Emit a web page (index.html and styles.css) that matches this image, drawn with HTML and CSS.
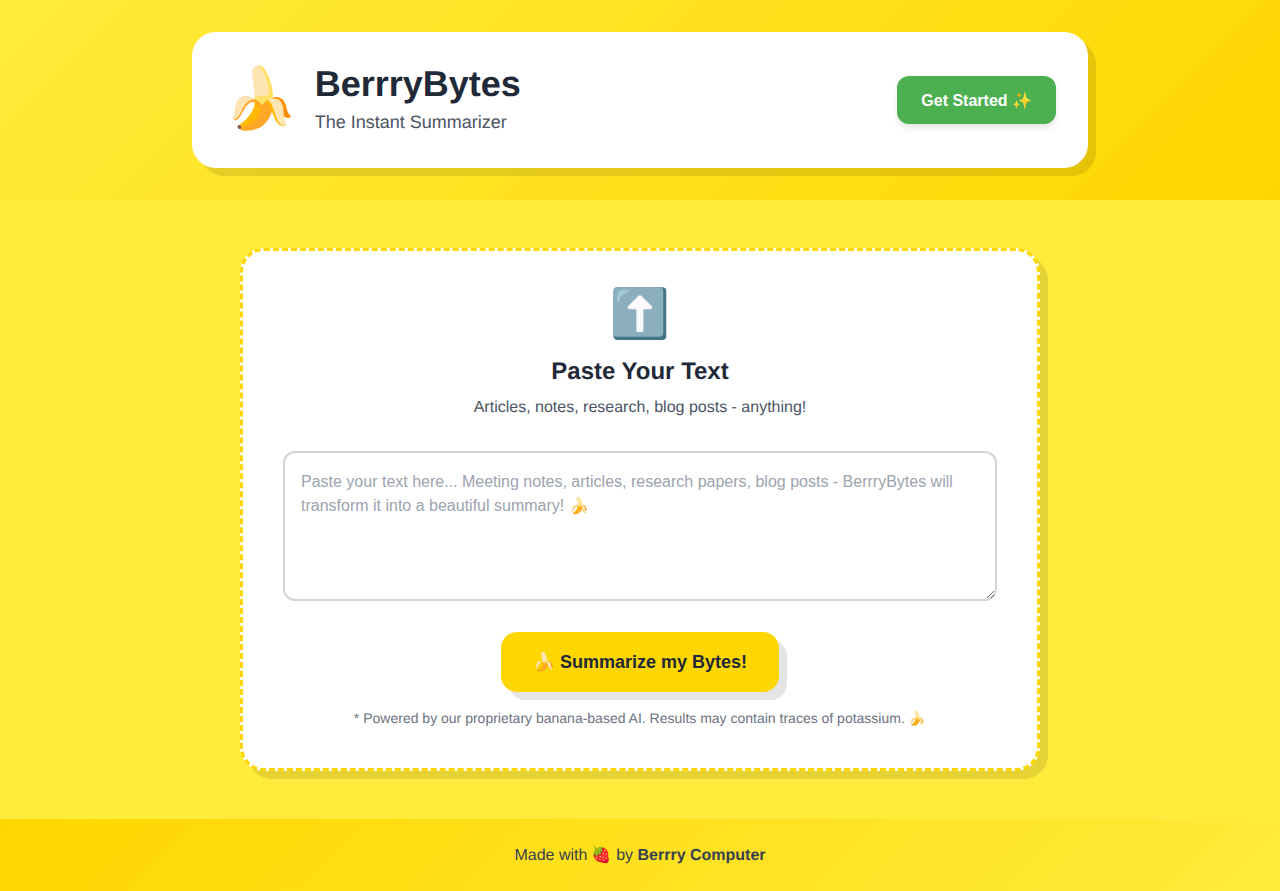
FILE: index.html
```html
<!DOCTYPE html>
<html lang="en">
<head>
    <meta charset="UTF-8">
    <meta name="viewport" content="width=device-width, initial-scale=1.0">
    <title>BerrryBytes - The Instant Summarizer</title>
    <link rel="stylesheet" href="styles.css">
</head>
<body>
    <header class="site-header">
        <div class="header-card">
            <div class="brand">
                <span class="brand-logo">🍌</span>
                <div>
                    <h1 class="brand-name">BerrryBytes</h1>
                    <p class="brand-tagline">The Instant Summarizer</p>
                </div>
            </div>
            <button class="start-btn">Get Started ✨</button>
        </div>
    </header>

    <main class="site-main">
        <section class="upload-card">
            <div class="upload-icon">⬆️</div>
            <h2 class="upload-title">Paste Your Text</h2>
            <p class="upload-hint">Articles, notes, research, blog posts - anything!</p>
            <textarea class="upload-input" placeholder="Paste your text here... Meeting notes, articles, research papers, blog posts - BerrryBytes will transform it into a beautiful summary! 🍌"></textarea>
            <button class="summarize-btn">🍌 Summarize my Bytes!</button>
            <p class="upload-note">* Powered by our proprietary banana-based AI. Results may contain traces of potassium. 🍌</p>
        </section>
    </main>

    <footer class="site-footer">
        Made with 🍓 by <strong>Berrry Computer</strong>
    </footer>
</body>
</html>
```

FILE: styles.css
```css
* {
    box-sizing: border-box;
}

body {
    margin: 0;
    min-height: 891px;
    display: flex;
    flex-direction: column;
    background-color: #FFEB3B;
    font-family: "Liberation Sans", Arial, sans-serif;
    text-rendering: geometricPrecision;
}

/* header */
.site-header {
    height: 200px;
    padding: 32px;
    background: linear-gradient(135deg, #FFEB3B, #FFD700);
}

.header-card {
    width: 896px;
    height: 136px;
    margin: 0 auto;
    padding: 32px;
    display: flex;
    align-items: center;
    justify-content: space-between;
    background-color: #fff;
    border-radius: 24px;
    box-shadow: 8px 8px 0 rgba(0, 0, 0, 0.1);
}

.brand {
    display: flex;
    align-items: center;
    gap: 16px;
}

.brand-logo {
    font-size: 60px;
    line-height: 72px;
    transform: rotate(2deg);
}

.brand-name {
    margin: 0;
    font-size: 36px;
    line-height: 40px;
    font-weight: bold;
    color: #1f2937;
}

.brand-tagline {
    margin: 4px 0 0;
    font-size: 18px;
    line-height: 28px;
    color: #4b5563;
}

.start-btn {
    padding: 13px 24px 11px;
    border: none;
    border-radius: 12px;
    background-color: #4CAF50;
    color: #fff;
    font-family: inherit;
    font-size: 16px;
    line-height: 24px;
    font-weight: bold;
    box-shadow: 0 4px 6px rgba(0, 0, 0, 0.1);
    cursor: pointer;
}

/* main */
.site-main {
    flex: 1;
    padding: 48px 32px;
}

.upload-card {
    width: 800px;
    margin: 0 auto;
    padding: 34px 40px 40px;
    display: flex;
    flex-direction: column;
    align-items: center;
    background-color: #fff;
    border: 3px dashed #FFD700;
    border-radius: 24px;
    box-shadow: 8px 8px 0 rgba(0, 0, 0, 0.1);
}

.upload-icon {
    font-size: 48px;
    line-height: 60px;
}

.upload-title {
    margin: 11px 0 0;
    font-size: 24px;
    line-height: 32px;
    font-weight: bold;
    color: #1f2937;
}

.upload-hint {
    margin: 8px 0 0;
    font-size: 16px;
    line-height: 24px;
    color: #4b5563;
}

.upload-input {
    display: block;
    width: 100%;
    height: 150px;
    margin-top: 31px;
    padding: 17px 16px 15px;
    border: 2px solid #d1d5db;
    border-radius: 12px;
    font-family: inherit;
    font-size: 16px;
    line-height: 24px;
    color: #1f2937;
}

.upload-input::placeholder {
    color: #9ca3af;
}

.summarize-btn {
    margin-top: 31px;
    padding: 16px 32px;
    border: none;
    border-radius: 16px;
    background-color: #FFD700;
    color: #1f2937;
    font-family: inherit;
    font-size: 18px;
    line-height: 28px;
    font-weight: bold;
    box-shadow: 8px 8px 0 rgba(0, 0, 0, 0.1);
    cursor: pointer;
}

.upload-note {
    margin: 16px 0 0;
    font-size: 14px;
    line-height: 20px;
    color: #6b7280;
}

/* footer */
.site-footer {
    height: 72px;
    padding: 25px 24px 23px;
    text-align: center;
    background: linear-gradient(135deg, #FFD700, #FFEB3B);
    font-size: 16px;
    line-height: 24px;
    color: #374151;
}
```
